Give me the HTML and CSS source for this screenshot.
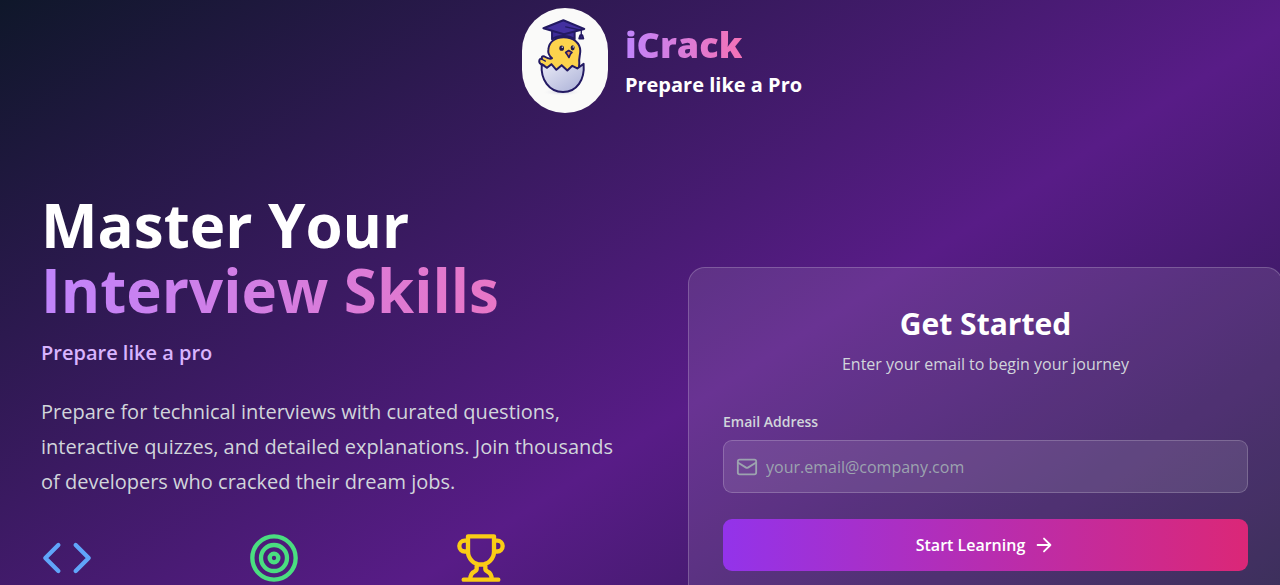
FILE: index.html
```html
<!DOCTYPE html>
<html lang="en">
<head>
<meta charset="utf-8">
<title>iCrack - Prepare like a Pro</title>
<link rel="stylesheet" href="styles.css">
</head>
<body>
<div class="page">
  <header class="header">
    <div class="logo">
      <svg class="logo-art" viewBox="33 22 258 316" aria-hidden="true">
        <defs>
          <linearGradient id="shell" x1="0" y1="0" x2="1" y2="1">
            <stop offset="0" stop-color="#e9eaf6"/>
            <stop offset="1" stop-color="#a9afd6"/>
          </linearGradient>
          <radialGradient id="shade">
            <stop offset="0" stop-color="#c9c8dc"/>
            <stop offset="1" stop-color="#fafaf9" stop-opacity="0"/>
          </radialGradient>
        </defs>
        <ellipse cx="153" cy="275" rx="60" ry="12" fill="url(#shade)"/>
        <g stroke="#231a63" stroke-width="6" stroke-linejoin="round" stroke-linecap="round">
          <path d="M112 146C114 124 132 110 158 110C188 110 208 128 208 151C208 164 203 173 205 188L203 218H105L98 195C88 192 83 185 85 178C86 174 91 175 93 176C90 170 94 165 100 168C108 173 117 178 123 173C113 165 110 157 112 146Z" fill="#fcd34d"/>
          <path d="M92 191L108 202L121 191L136 208L152 194L169 210L184 196L199 204L218 190C222 238 198 275 156 275C114 275 88 238 92 191Z" fill="url(#shell)"/>
          <path d="M123 90V116C140 103 174 103 191 116V90Z" fill="#3d2c98"/>
          <path d="M97 83L157 59L220 85L159 101Z" fill="#4330a0"/>
          <path d="M164 79L211 89V104" fill="none" stroke-width="4"/>
          <path d="M208 104H214L217 114H205Z" fill="#4330a0"/>
          <path d="M164 156L173 150L183 156L178 161L174 171L169 163Z" fill="#f08a3c" stroke-width="5"/>
          <path d="M94 177L103 182" fill="none" stroke-width="4"/>
        </g>
        <ellipse cx="152" cy="143" rx="7" ry="8" fill="#231a4a"/>
        <ellipse cx="185" cy="142" rx="6" ry="8" fill="#231a4a"/>
        <circle cx="154" cy="140" r="2" fill="#fff"/>
        <circle cx="187" cy="139" r="2" fill="#fff"/>
      </svg>
    </div>
    <div class="brand">
      <span class="brand-name">iCrack</span>
      <span class="brand-tag">Prepare like a Pro</span>
    </div>
  </header>

  <main class="hero">
    <section class="intro">
      <h1 class="title">Master Your <span class="title-accent">Interview Skills</span></h1>
      <p class="tagline">Prepare like a pro</p>
      <p class="lead">Prepare for technical interviews with curated questions, interactive quizzes, and detailed explanations. Join thousands of developers who cracked their dream jobs.</p>
      <div class="features">
        <svg class="icon feature-icon blue" viewBox="0 0 24 24" aria-hidden="true"><path d="M16 18l6-6-6-6M8 6l-6 6 6 6"/></svg>
        <svg class="icon feature-icon green" viewBox="0 0 24 24" aria-hidden="true"><circle cx="12" cy="12" r="10"/><circle cx="12" cy="12" r="6"/><circle cx="12" cy="12" r="2"/></svg>
        <svg class="icon feature-icon yellow" viewBox="0 0 24 24" aria-hidden="true"><path d="M6 9H4.5a2.5 2.5 0 0 1 0-5H6M18 9h1.500a2.500 2.500 0 0 0 0-5H18M4 22h16M10 14.660V17c0 .55-.47.98-.97 1.210C7.850 18.750 7 20.240 7 22M14 14.660V17c0 .55.47.98.97 1.210C16.150 18.750 17 20.240 17 22M18 2H6v7a6 6 0 0 0 12 0V2Z"/></svg>
      </div>
    </section>

    <section class="card">
      <h2 class="card-title">Get Started</h2>
      <p class="card-text">Enter your email to begin your journey</p>
      <form class="form">
        <label class="label" for="email">Email Address</label>
        <div class="field">
          <svg class="icon small-icon" viewBox="0 0 24 24" aria-hidden="true"><rect x="2" y="4" width="20" height="16" rx="2"/><path d="M22 7l-8.970 5.700a1.940 1.940 0 0 1-2.060 0L2 7"/></svg>
          <input class="input" id="email" type="email" placeholder="your.email@company.com">
        </div>
        <button class="button" type="button">
          Start Learning
          <svg class="icon small-icon" viewBox="0 0 24 24" aria-hidden="true"><path d="M5 12h14M12 5l7 7-7 7"/></svg>
        </button>
      </form>
    </section>
  </main>
</div>
</body>
</html>
```

FILE: styles.css
```css
* {
  box-sizing: border-box;
}

body {
  margin: 0;
  overflow: hidden;
  background: #0f172a;
  color: #fff;
  font-family: "Open Sans", "Noto Sans", sans-serif;
}

h1, h2, p {
  margin: 0;
}

/* The page runs a little wider than the window */
.page {
  width: calc(100% + 44px);
  min-height: 145vh;
  padding: 8px 41px;
  background: linear-gradient(to bottom right, #0f172a, #581c87, #0f172a);
}

.header {
  display: flex;
  justify-content: center;
  align-items: center;
  gap: 17px;
}

.logo {
  display: flex;
  border-radius: 43px;
  background: #fafaf9;
  overflow: hidden;
}

.logo-art {
  width: 86px;
  height: 105px;
}

.brand {
  display: flex;
  flex-direction: column;
}

.brand-name {
  align-self: flex-start;
  font-size: 36px;
  line-height: 48px;
  font-weight: 800;
  background: linear-gradient(to right, #c084fc, #f472b6);
  background-clip: text;
  color: transparent;
}

.brand-tag {
  font-size: 20px;
  line-height: 32px;
  font-weight: 700;
}

.hero {
  display: grid;
  grid-template-columns: 1fr 1fr;
  gap: 52px;
  align-items: start;
  padding-top: 80px;
}

.title {
  font-size: 60px;
  line-height: 65px;
  font-weight: 700;
}

.title-accent {
  display: block;
  background: linear-gradient(to right, #c084fc, #f472b6);
  background-clip: text;
  color: transparent;
}

.tagline {
  margin-top: 15px;
  font-size: 20px;
  line-height: 30px;
  font-weight: 600;
  color: #d8b4fe;
}

.lead {
  margin-top: 26px;
  font-size: 20px;
  line-height: 35px;
  color: #d1d5db;
}

.features {
  display: grid;
  grid-template-columns: repeat(3, 1fr);
  gap: 26px;
  margin-top: 33px;
}

.icon {
  display: block;
  flex: none;
  fill: none;
  stroke: currentColor;
  stroke-width: 2;
  stroke-linecap: round;
  stroke-linejoin: round;
}

.feature-icon {
  width: 52px;
  height: 52px;
}

.small-icon {
  width: 22px;
  height: 22px;
}

.blue { color: #60a5fa; }
.green { color: #4ade80; }
.yellow { color: #facc15; }

.card {
  margin-top: 74px;
  padding: 34px 34px 52px;
  border: 1px solid rgba(255, 255, 255, 0.2);
  border-radius: 17px;
  background: rgba(255, 255, 255, 0.1);
  text-align: center;
}

.card-title {
  font-size: 30px;
  line-height: 44px;
  font-weight: 700;
}

.card-text {
  margin-top: 4px;
  font-size: 16px;
  line-height: 28px;
  color: #d1d5db;
}

.form {
  display: flex;
  flex-direction: column;
  margin-top: 34px;
}

.label {
  font-size: 14px;
  line-height: 20px;
  font-weight: 600;
  color: #d1d5db;
  text-align: left;
}

.field {
  display: flex;
  align-items: center;
  gap: 8px;
  height: 53px;
  margin-top: 8px;
  padding: 0 12px;
  border: 1px solid rgba(255, 255, 255, 0.2);
  border-radius: 9px;
  background: rgba(255, 255, 255, 0.1);
  color: #9ca3af;
}

.input {
  flex: 1;
  min-width: 0;
  padding: 0;
  border: 0;
  outline: 0;
  background: transparent;
  color: #fff;
  font-family: inherit;
  font-size: 16px;
  line-height: 26px;
}

.input::placeholder {
  color: #9ca3af;
}

.button {
  display: flex;
  align-items: center;
  justify-content: center;
  gap: 8px;
  height: 52px;
  margin-top: 26px;
  border: 0;
  border-radius: 9px;
  background: linear-gradient(to right, #9333ea, #db2777);
  color: #fff;
  font-family: inherit;
  font-size: 16px;
  font-weight: 600;
}
```
